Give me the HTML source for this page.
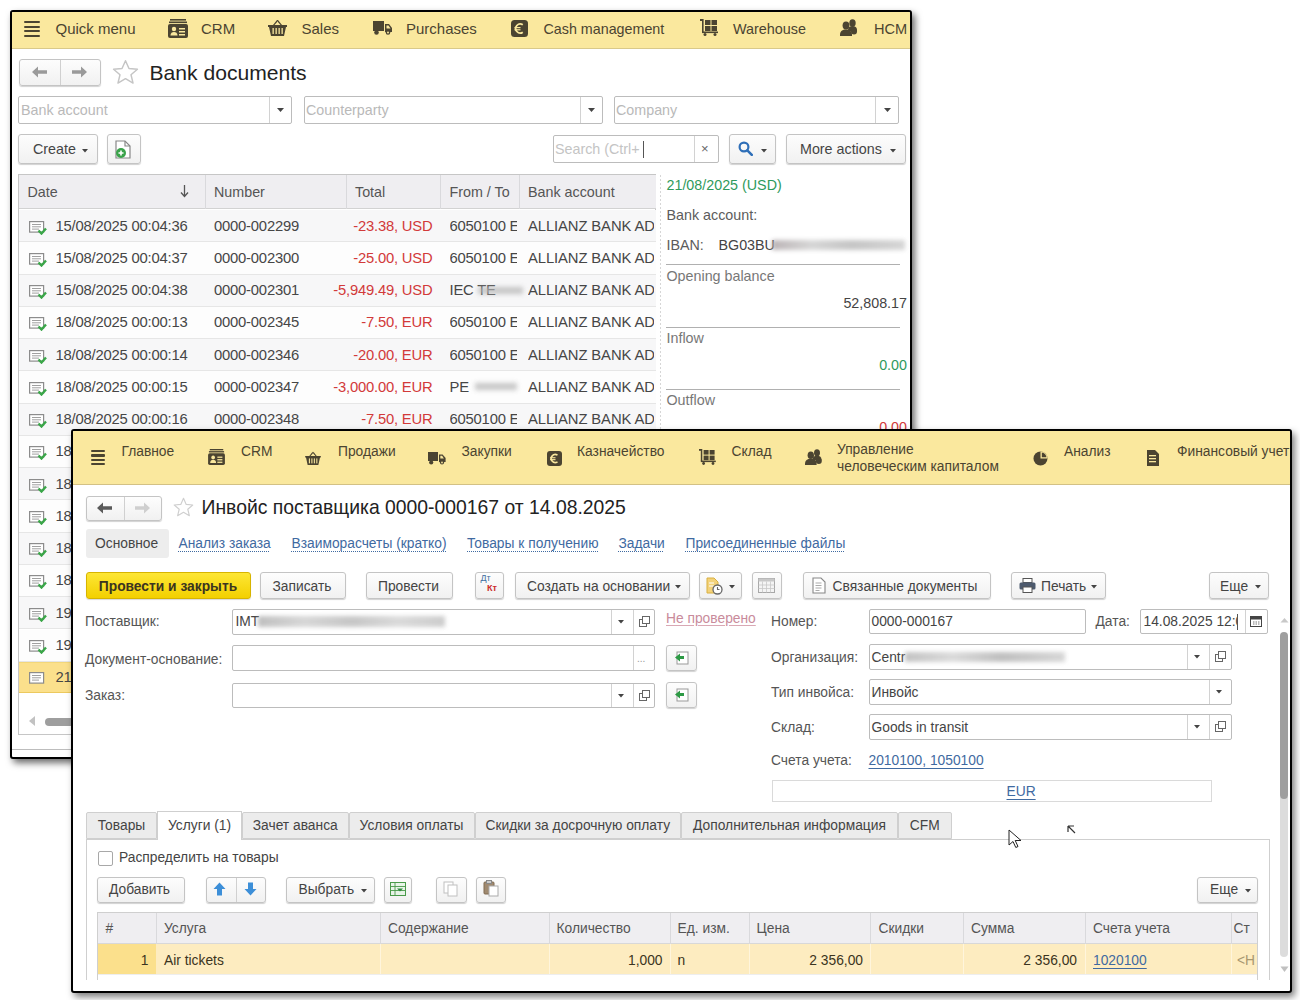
<!DOCTYPE html><html><head><meta charset="utf-8"><style>
*{margin:0;padding:0;box-sizing:border-box}
html,body{width:1300px;height:1000px;overflow:hidden;background:#fff;font-family:"Liberation Sans", sans-serif}
.t{position:absolute;white-space:nowrap;line-height:1;font-family:"Liberation Sans", sans-serif}
.b{position:absolute}
.win{position:absolute;border:2px solid #000;background:#fff;overflow:hidden}
.in{position:absolute;left:0;top:0;width:1300px;height:1000px}
.btn{position:absolute;border:1px solid #c4c4c4;border-radius:3px;background:linear-gradient(#fdfdfd,#f1f1f1);box-shadow:0 1px 1px rgba(0,0,0,.18)}
.fld{position:absolute;border:1px solid #bcbcbc;border-radius:2px;background:#fff}
.vl{position:absolute;width:1px;background:#d6d6d6}
</style></head><body>
<div class="win" style="left:10px;top:10px;width:902px;height:749px;border-radius:3px;box-shadow:3px 4px 7px rgba(0,0,0,.58)">
<div class="in" style="left:-12px;top:-12px">
<div class="b" style="left:0.0px;top:12.0px;width:1300.0px;height:37.0px;background:#fae89e;border-bottom:1px solid #d9c98a"></div>
<div class="b" style="left:24.0px;top:21.0px;width:16.0px;height:2.0px;background:#4b4431;border-radius:1px"></div>
<div class="b" style="left:24.0px;top:25.5px;width:16.0px;height:2.0px;background:#4b4431;border-radius:1px"></div>
<div class="b" style="left:24.0px;top:30.0px;width:16.0px;height:2.0px;background:#4b4431;border-radius:1px"></div>
<div class="b" style="left:24.0px;top:34.5px;width:16.0px;height:2.0px;background:#4b4431;border-radius:1px"></div>
<div class="t" style="left:55.5px;top:21.3px;font-size:15px;color:#4b4431;">Quick menu</div>
<svg class="b" style="left:168px;top:19px" width="20" height="19" viewBox="0 0 20 19"><g fill="#4b4431"><rect x="2" y="0" width="16" height="1.6"/><rect x="1" y="2.5" width="18" height="1.6"/><rect x="0" y="5" width="20" height="14" rx="2"/></g><g fill="#fae89e"><circle cx="6" cy="10" r="2.2"/><path d="M2.5 16.5c0-2.5 1.5-3.6 3.5-3.6s3.5 1.1 3.5 3.6z"/><rect x="11" y="9" width="6" height="1.5"/><rect x="11" y="12" width="6" height="1.5"/><rect x="11" y="15" width="6" height="1.5"/></g></svg>
<div class="t" style="left:201.0px;top:21.3px;font-size:15px;color:#4b4431;">CRM</div>
<svg class="b" style="left:268px;top:19px" width="19" height="17" viewBox="0 0 19 17"><g fill="#4b4431"><path d="M0 6h19v2h-1l-2 9H3L1 8H0z"/><path d="M5 6l4-5 1 1-3.5 4zM14 6l-4-5-1 1 3.5 4z"/></g><g fill="#fae89e"><rect x="4.5" y="9" width="1.3" height="6"/><rect x="7.5" y="9" width="1.3" height="6"/><rect x="10.5" y="9" width="1.3" height="6"/><rect x="13.5" y="9" width="1.3" height="6"/></g></svg>
<div class="t" style="left:301.5px;top:21.3px;font-size:15px;color:#4b4431;">Sales</div>
<svg class="b" style="left:373px;top:20px" width="19" height="15" viewBox="0 0 19 15"><g fill="#4b4431"><rect x="0" y="1" width="11" height="10"/><path d="M12 4h4l3 4v4h-7z"/><circle cx="3.5" cy="12.5" r="2.3"/><circle cx="15" cy="12.5" r="2.3"/></g><g fill="#fae89e"><path d="M13.5 5.5h2l2 3h-4z"/><circle cx="15" cy="12.5" r="1"/></g></svg>
<div class="t" style="left:406.0px;top:21.3px;font-size:15px;color:#4b4431;">Purchases</div>
<svg class="b" style="left:511px;top:20px" width="17" height="17" viewBox="0 0 17 17"><rect x="0" y="0" width="17" height="17" rx="3.5" fill="#4b4431"/><path d="M11.8 4.8A4.5 4.5 0 1 0 11.8 12.2" stroke="#fae89e" stroke-width="1.8" fill="none"/><rect x="3.5" y="7" width="6" height="1.2" fill="#fae89e"/><rect x="3.5" y="9.2" width="6" height="1.2" fill="#fae89e"/></svg>
<div class="t" style="left:543.5px;top:21.9px;font-size:14.3px;color:#4b4431;">Cash management</div>
<svg class="b" style="left:700px;top:19px" width="18" height="17" viewBox="0 0 18 17"><g fill="#4b4431"><rect x="0" y="0" width="3" height="2"/><rect x="2" y="0" width="1.6" height="13"/><rect x="5" y="1" width="5.5" height="5"/><rect x="11.5" y="1" width="5.5" height="5"/><rect x="5" y="7" width="5.5" height="5"/><rect x="11.5" y="7" width="5.5" height="5"/><rect x="2" y="12.5" width="16" height="1.6"/><circle cx="5" cy="15.5" r="1.5"/><circle cx="15" cy="15.5" r="1.5"/></g></svg>
<div class="t" style="left:733.0px;top:21.8px;font-size:14.4px;color:#4b4431;">Warehouse</div>
<svg class="b" style="left:840px;top:19px" width="19" height="17" viewBox="0 0 19 17"><g fill="#4b4431"><ellipse cx="12.5" cy="4" rx="3.2" ry="3.8"/><path d="M8 11c0-3 2-4 4.5-4s4.5 1 4.5 4v1H8z"/><ellipse cx="6" cy="6.5" rx="3.4" ry="4"/><path d="M0 16c0-4 2.5-5.5 6-5.5s6 1.5 6 5.5v1H0z"/><path d="M11 12.5a3 3 0 1 1 6 0 3 3 0 1 1 -6 0z"/></g></svg>
<div class="t" style="left:874.0px;top:21.6px;font-size:14.6px;color:#4b4431;">HCM</div>
<div class="btn" style="left:19px;top:59px;width:82px;height:27px"></div>
<div class="b" style="left:60.0px;top:60.0px;width:1.0px;height:25.0px;background:#d0d0d0"></div>
<svg class="b" style="left:32px;top:66px" width="15" height="12" viewBox="0 0 15 12"><path d="M0 6L6 0.5V4.2H15V7.8H6V11.5z" fill="#9a9a9a"/></svg>
<svg class="b" style="left:72px;top:66px" width="15" height="12" viewBox="0 0 15 12"><path d="M15 6L9 0.5V4.2H0V7.8H9V11.5z" fill="#9a9a9a"/></svg>
<svg class="b" style="left:112px;top:59px" width="27" height="27" viewBox="0 0 24 24"><path d="M12 1.5l3.1 7 7.5.6-5.7 4.9 1.8 7.4L12 17.5l-6.7 3.9 1.8-7.4L1.4 9.1l7.5-.6z" fill="none" stroke="#c5c5c5" stroke-width="1.3" stroke-linejoin="round"/></svg>
<div class="t" style="left:149.5px;top:61.9px;font-size:21.1px;color:#222;">Bank documents</div>
<div class="fld" style="left:18px;top:96px;width:274px;height:28px"></div>
<div class="b" style="left:269.0px;top:97.0px;width:1.0px;height:26.0px;background:#d2d2d2"></div>
<svg class="b" style="left:277px;top:108px" width="7" height="5" viewBox="0 0 7 5"><path d="M0 0H7L3.5 4.0z" fill="#444"/></svg>
<div class="t" style="left:21.0px;top:103.4px;font-size:14.3px;color:#b9b9b9;">Bank account</div>
<div class="fld" style="left:304px;top:96px;width:299px;height:28px"></div>
<div class="b" style="left:580.0px;top:97.0px;width:1.0px;height:26.0px;background:#d2d2d2"></div>
<svg class="b" style="left:588px;top:108px" width="7" height="5" viewBox="0 0 7 5"><path d="M0 0H7L3.5 4.0z" fill="#444"/></svg>
<div class="t" style="left:306.0px;top:103.4px;font-size:14.3px;color:#b9b9b9;">Counterparty</div>
<div class="fld" style="left:614px;top:96px;width:285px;height:28px"></div>
<div class="b" style="left:875.0px;top:97.0px;width:1.0px;height:26.0px;background:#d2d2d2"></div>
<svg class="b" style="left:884px;top:108px" width="7" height="5" viewBox="0 0 7 5"><path d="M0 0H7L3.5 4.0z" fill="#444"/></svg>
<div class="t" style="left:616.0px;top:103.4px;font-size:14.3px;color:#b9b9b9;">Company</div>
<div class="btn" style="left:18px;top:134px;width:80px;height:30px"></div>
<div class="t" style="left:33.0px;top:141.9px;font-size:14.3px;color:#454545;">Create</div>
<svg class="b" style="left:82px;top:149px" width="6" height="4" viewBox="0 0 6 4"><path d="M0 0H6L3.0 3.5z" fill="#444"/></svg>
<div class="btn" style="left:107px;top:134px;width:34px;height:30px"></div>
<svg class="b" style="left:115px;top:140px" width="17" height="19" viewBox="0 0 17 19"><path d="M1 1h9l5 5v12H1z" fill="#fff" stroke="#888" stroke-width="1.2"/><path d="M10 1v5h5" fill="none" stroke="#888" stroke-width="1.2"/><circle cx="6" cy="13" r="5" fill="#3aa34a"/><path d="M3.5 13h5M6 10.5v5" stroke="#fff" stroke-width="1.6"/></svg>
<div class="fld" style="left:553px;top:135px;width:166px;height:28px"></div>
<div class="b" style="left:694.0px;top:136.0px;width:1.0px;height:26.0px;background:#d2d2d2"></div>
<div class="t" style="left:555.0px;top:141.9px;font-size:14.3px;color:#c4c4c4;">Search (Ctrl+</div>
<div class="b" style="left:642.5px;top:141.0px;width:1.0px;height:17.0px;background:#555"></div>
<div class="t" style="left:701.0px;top:142.0px;font-size:13px;color:#666;">×</div>
<div class="btn" style="left:729px;top:134px;width:47px;height:30px"></div>
<svg class="b" style="left:738px;top:141px" width="15" height="15" viewBox="0 0 15 15"><circle cx="6" cy="6" r="4.4" fill="none" stroke="#2f6fb8" stroke-width="2.2"/><path d="M9.3 9.3l4.5 4.5" stroke="#2f6fb8" stroke-width="2.6" stroke-linecap="round"/></svg>
<svg class="b" style="left:761px;top:149px" width="6" height="4" viewBox="0 0 6 4"><path d="M0 0H6L3.0 3.5z" fill="#444"/></svg>
<div class="btn" style="left:786px;top:134px;width:120px;height:30px"></div>
<div class="t" style="left:800.0px;top:141.9px;font-size:14.3px;color:#454545;">More actions</div>
<svg class="b" style="left:890px;top:149px" width="6" height="4" viewBox="0 0 6 4"><path d="M0 0H6L3.0 3.5z" fill="#444"/></svg>
<div class="b" style="left:18.0px;top:174.0px;width:638.0px;height:561.0px;border:1px solid #c6c6c6;background:#fff"></div>
<div class="b" style="left:19.0px;top:175.0px;width:637.0px;height:34.0px;background:#efeef1;border-bottom:1px solid #d2d2d2"></div>
<div class="b" style="left:204.5px;top:175.0px;width:1.0px;height:34.0px;background:#d9d9dc"></div>
<div class="b" style="left:345.5px;top:175.0px;width:1.0px;height:34.0px;background:#d9d9dc"></div>
<div class="b" style="left:440.0px;top:175.0px;width:1.0px;height:34.0px;background:#d9d9dc"></div>
<div class="b" style="left:519.0px;top:175.0px;width:1.0px;height:34.0px;background:#d9d9dc"></div>
<div class="t" style="left:27.5px;top:184.9px;font-size:14.3px;color:#555;">Date</div>
<svg class="b" style="left:180px;top:185px" width="9" height="13" viewBox="0 0 9 13"><path d="M4.5 0v11M1 7.5l3.5 4 3.5-4" fill="none" stroke="#555" stroke-width="1.3"/></svg>
<div class="t" style="left:214.0px;top:184.9px;font-size:14.3px;color:#555;">Number</div>
<div class="t" style="left:355.0px;top:184.9px;font-size:14.3px;color:#555;">Total</div>
<div class="t" style="left:449.5px;top:184.9px;font-size:14.3px;color:#555;width:66px;overflow:hidden">From / To</div>
<div class="t" style="left:528.0px;top:184.9px;font-size:14.3px;color:#555;">Bank account</div>
<div class="b" style="left:19.0px;top:210.0px;width:637.0px;height:32.3px;background:#f7f7f8;border-bottom:1px solid #e6e6e6"></div>
<svg class="b" style="left:29px;top:220.5px" width="18" height="14" viewBox="0 0 18 14"><rect x="0.6" y="0.6" width="14" height="10.5" fill="#fff" stroke="#8c8c8c" stroke-width="1.2"/><path d="M3 3.5h9M3 5.8h9M3 8.1h7" stroke="#a0a0a0" stroke-width="1"/><path d="M9.5 9.5l3 3 4.5-5" fill="none" stroke="#3aa648" stroke-width="2.4"/></svg>
<div class="t" style="left:55.5px;top:218.5px;font-size:14.8px;color:#464646;letter-spacing:-0.2px;">15/08/2025 00:04:36</div>
<div class="t" style="left:214.0px;top:218.5px;font-size:14.8px;color:#464646;letter-spacing:-0.2px;">0000-002299</div>
<div class="t" style="right:867.5px;top:218.5px;font-size:14.8px;color:#d23a3a;letter-spacing:-0.2px;">-23.38, USD</div>
<div class="t" style="left:449.5px;top:218.5px;font-size:14.8px;color:#464646;letter-spacing:-0.2px;width:67px;overflow:hidden">6050100 E</div>
<div class="t" style="left:528.0px;top:218.5px;font-size:14.8px;color:#464646;letter-spacing:-0.1px;width:126px;overflow:hidden">ALLIANZ BANK AD</div>
<div class="b" style="left:19.0px;top:242.3px;width:637.0px;height:32.3px;background:#fdfdfd;border-bottom:1px solid #e6e6e6"></div>
<svg class="b" style="left:29px;top:252.77px" width="18" height="14" viewBox="0 0 18 14"><rect x="0.6" y="0.6" width="14" height="10.5" fill="#fff" stroke="#8c8c8c" stroke-width="1.2"/><path d="M3 3.5h9M3 5.8h9M3 8.1h7" stroke="#a0a0a0" stroke-width="1"/><path d="M9.5 9.5l3 3 4.5-5" fill="none" stroke="#3aa648" stroke-width="2.4"/></svg>
<div class="t" style="left:55.5px;top:250.7px;font-size:14.8px;color:#464646;letter-spacing:-0.2px;">15/08/2025 00:04:37</div>
<div class="t" style="left:214.0px;top:250.7px;font-size:14.8px;color:#464646;letter-spacing:-0.2px;">0000-002300</div>
<div class="t" style="right:867.5px;top:250.7px;font-size:14.8px;color:#d23a3a;letter-spacing:-0.2px;">-25.00, USD</div>
<div class="t" style="left:449.5px;top:250.7px;font-size:14.8px;color:#464646;letter-spacing:-0.2px;width:67px;overflow:hidden">6050100 E</div>
<div class="t" style="left:528.0px;top:250.7px;font-size:14.8px;color:#464646;letter-spacing:-0.1px;width:126px;overflow:hidden">ALLIANZ BANK AD</div>
<div class="b" style="left:19.0px;top:274.5px;width:637.0px;height:32.3px;background:#f7f7f8;border-bottom:1px solid #e6e6e6"></div>
<svg class="b" style="left:29px;top:285.04px" width="18" height="14" viewBox="0 0 18 14"><rect x="0.6" y="0.6" width="14" height="10.5" fill="#fff" stroke="#8c8c8c" stroke-width="1.2"/><path d="M3 3.5h9M3 5.8h9M3 8.1h7" stroke="#a0a0a0" stroke-width="1"/><path d="M9.5 9.5l3 3 4.5-5" fill="none" stroke="#3aa648" stroke-width="2.4"/></svg>
<div class="t" style="left:55.5px;top:283.0px;font-size:14.8px;color:#464646;letter-spacing:-0.2px;">15/08/2025 00:04:38</div>
<div class="t" style="left:214.0px;top:283.0px;font-size:14.8px;color:#464646;letter-spacing:-0.2px;">0000-002301</div>
<div class="t" style="right:867.5px;top:283.0px;font-size:14.8px;color:#d23a3a;letter-spacing:-0.2px;">-5,949.49, USD</div>
<div class="t" style="left:449.5px;top:283.0px;font-size:14.8px;color:#464646;letter-spacing:-0.2px;">IEC TE</div>
<div class="b" style="left:478.0px;top:286.5px;width:45.0px;height:7.0px;background:#b8b8b8;filter:blur(2.5px);opacity:.8"></div>
<div class="t" style="left:528.0px;top:283.0px;font-size:14.8px;color:#464646;letter-spacing:-0.1px;width:126px;overflow:hidden">ALLIANZ BANK AD</div>
<div class="b" style="left:19.0px;top:306.8px;width:637.0px;height:32.3px;background:#fdfdfd;border-bottom:1px solid #e6e6e6"></div>
<svg class="b" style="left:29px;top:317.31px" width="18" height="14" viewBox="0 0 18 14"><rect x="0.6" y="0.6" width="14" height="10.5" fill="#fff" stroke="#8c8c8c" stroke-width="1.2"/><path d="M3 3.5h9M3 5.8h9M3 8.1h7" stroke="#a0a0a0" stroke-width="1"/><path d="M9.5 9.5l3 3 4.5-5" fill="none" stroke="#3aa648" stroke-width="2.4"/></svg>
<div class="t" style="left:55.5px;top:315.3px;font-size:14.8px;color:#464646;letter-spacing:-0.2px;">18/08/2025 00:00:13</div>
<div class="t" style="left:214.0px;top:315.3px;font-size:14.8px;color:#464646;letter-spacing:-0.2px;">0000-002345</div>
<div class="t" style="right:867.5px;top:315.3px;font-size:14.8px;color:#d23a3a;letter-spacing:-0.2px;">-7.50, EUR</div>
<div class="t" style="left:449.5px;top:315.3px;font-size:14.8px;color:#464646;letter-spacing:-0.2px;width:67px;overflow:hidden">6050100 E</div>
<div class="t" style="left:528.0px;top:315.3px;font-size:14.8px;color:#464646;letter-spacing:-0.1px;width:126px;overflow:hidden">ALLIANZ BANK AD</div>
<div class="b" style="left:19.0px;top:339.1px;width:637.0px;height:32.3px;background:#f7f7f8;border-bottom:1px solid #e6e6e6"></div>
<svg class="b" style="left:29px;top:349.58000000000004px" width="18" height="14" viewBox="0 0 18 14"><rect x="0.6" y="0.6" width="14" height="10.5" fill="#fff" stroke="#8c8c8c" stroke-width="1.2"/><path d="M3 3.5h9M3 5.8h9M3 8.1h7" stroke="#a0a0a0" stroke-width="1"/><path d="M9.5 9.5l3 3 4.5-5" fill="none" stroke="#3aa648" stroke-width="2.4"/></svg>
<div class="t" style="left:55.5px;top:347.6px;font-size:14.8px;color:#464646;letter-spacing:-0.2px;">18/08/2025 00:00:14</div>
<div class="t" style="left:214.0px;top:347.6px;font-size:14.8px;color:#464646;letter-spacing:-0.2px;">0000-002346</div>
<div class="t" style="right:867.5px;top:347.6px;font-size:14.8px;color:#d23a3a;letter-spacing:-0.2px;">-20.00, EUR</div>
<div class="t" style="left:449.5px;top:347.6px;font-size:14.8px;color:#464646;letter-spacing:-0.2px;width:67px;overflow:hidden">6050100 E</div>
<div class="t" style="left:528.0px;top:347.6px;font-size:14.8px;color:#464646;letter-spacing:-0.1px;width:126px;overflow:hidden">ALLIANZ BANK AD</div>
<div class="b" style="left:19.0px;top:371.4px;width:637.0px;height:32.3px;background:#fdfdfd;border-bottom:1px solid #e6e6e6"></div>
<svg class="b" style="left:29px;top:381.85px" width="18" height="14" viewBox="0 0 18 14"><rect x="0.6" y="0.6" width="14" height="10.5" fill="#fff" stroke="#8c8c8c" stroke-width="1.2"/><path d="M3 3.5h9M3 5.8h9M3 8.1h7" stroke="#a0a0a0" stroke-width="1"/><path d="M9.5 9.5l3 3 4.5-5" fill="none" stroke="#3aa648" stroke-width="2.4"/></svg>
<div class="t" style="left:55.5px;top:379.8px;font-size:14.8px;color:#464646;letter-spacing:-0.2px;">18/08/2025 00:00:15</div>
<div class="t" style="left:214.0px;top:379.8px;font-size:14.8px;color:#464646;letter-spacing:-0.2px;">0000-002347</div>
<div class="t" style="right:867.5px;top:379.8px;font-size:14.8px;color:#d23a3a;letter-spacing:-0.2px;">-3,000.00, EUR</div>
<div class="t" style="left:449.5px;top:379.8px;font-size:14.8px;color:#464646;letter-spacing:-0.2px;">PE</div>
<div class="b" style="left:475.0px;top:383.4px;width:42.0px;height:7.0px;background:#b8b8b8;filter:blur(2.5px);opacity:.8"></div>
<div class="t" style="left:528.0px;top:379.8px;font-size:14.8px;color:#464646;letter-spacing:-0.1px;width:126px;overflow:hidden">ALLIANZ BANK AD</div>
<div class="b" style="left:19.0px;top:403.6px;width:637.0px;height:32.3px;background:#f7f7f8;border-bottom:1px solid #e6e6e6"></div>
<svg class="b" style="left:29px;top:414.12px" width="18" height="14" viewBox="0 0 18 14"><rect x="0.6" y="0.6" width="14" height="10.5" fill="#fff" stroke="#8c8c8c" stroke-width="1.2"/><path d="M3 3.5h9M3 5.8h9M3 8.1h7" stroke="#a0a0a0" stroke-width="1"/><path d="M9.5 9.5l3 3 4.5-5" fill="none" stroke="#3aa648" stroke-width="2.4"/></svg>
<div class="t" style="left:55.5px;top:412.1px;font-size:14.8px;color:#464646;letter-spacing:-0.2px;">18/08/2025 00:00:16</div>
<div class="t" style="left:214.0px;top:412.1px;font-size:14.8px;color:#464646;letter-spacing:-0.2px;">0000-002348</div>
<div class="t" style="right:867.5px;top:412.1px;font-size:14.8px;color:#d23a3a;letter-spacing:-0.2px;">-7.50, EUR</div>
<div class="t" style="left:449.5px;top:412.1px;font-size:14.8px;color:#464646;letter-spacing:-0.2px;width:67px;overflow:hidden">6050100 E</div>
<div class="t" style="left:528.0px;top:412.1px;font-size:14.8px;color:#464646;letter-spacing:-0.1px;width:126px;overflow:hidden">ALLIANZ BANK AD</div>
<div class="b" style="left:19.0px;top:435.9px;width:637.0px;height:32.3px;background:#fdfdfd;border-bottom:1px solid #e6e6e6"></div>
<svg class="b" style="left:29px;top:446.39px" width="18" height="14" viewBox="0 0 18 14"><rect x="0.6" y="0.6" width="14" height="10.5" fill="#fff" stroke="#8c8c8c" stroke-width="1.2"/><path d="M3 3.5h9M3 5.8h9M3 8.1h7" stroke="#a0a0a0" stroke-width="1"/><path d="M9.5 9.5l3 3 4.5-5" fill="none" stroke="#3aa648" stroke-width="2.4"/></svg>
<div class="t" style="left:55.5px;top:444.4px;font-size:14.8px;color:#464646;letter-spacing:-0.2px;">18/08/2025 00:00:17</div>
<div class="t" style="left:214.0px;top:444.4px;font-size:14.8px;color:#464646;letter-spacing:-0.2px;">0000-002349</div>
<div class="t" style="right:867.5px;top:444.4px;font-size:14.8px;color:#d23a3a;letter-spacing:-0.2px;">-7.50, EUR</div>
<div class="t" style="left:449.5px;top:444.4px;font-size:14.8px;color:#464646;letter-spacing:-0.2px;width:67px;overflow:hidden">6050100 E</div>
<div class="t" style="left:528.0px;top:444.4px;font-size:14.8px;color:#464646;letter-spacing:-0.1px;width:126px;overflow:hidden">ALLIANZ BANK AD</div>
<div class="b" style="left:19.0px;top:468.2px;width:637.0px;height:32.3px;background:#f7f7f8;border-bottom:1px solid #e6e6e6"></div>
<svg class="b" style="left:29px;top:478.66px" width="18" height="14" viewBox="0 0 18 14"><rect x="0.6" y="0.6" width="14" height="10.5" fill="#fff" stroke="#8c8c8c" stroke-width="1.2"/><path d="M3 3.5h9M3 5.8h9M3 8.1h7" stroke="#a0a0a0" stroke-width="1"/><path d="M9.5 9.5l3 3 4.5-5" fill="none" stroke="#3aa648" stroke-width="2.4"/></svg>
<div class="t" style="left:55.5px;top:476.6px;font-size:14.8px;color:#464646;letter-spacing:-0.2px;">18/08/2025 00:00:18</div>
<div class="t" style="left:214.0px;top:476.6px;font-size:14.8px;color:#464646;letter-spacing:-0.2px;">0000-002350</div>
<div class="t" style="right:867.5px;top:476.6px;font-size:14.8px;color:#d23a3a;letter-spacing:-0.2px;">-7.50, EUR</div>
<div class="t" style="left:449.5px;top:476.6px;font-size:14.8px;color:#464646;letter-spacing:-0.2px;width:67px;overflow:hidden">6050100 E</div>
<div class="t" style="left:528.0px;top:476.6px;font-size:14.8px;color:#464646;letter-spacing:-0.1px;width:126px;overflow:hidden">ALLIANZ BANK AD</div>
<div class="b" style="left:19.0px;top:500.4px;width:637.0px;height:32.3px;background:#fdfdfd;border-bottom:1px solid #e6e6e6"></div>
<svg class="b" style="left:29px;top:510.93px" width="18" height="14" viewBox="0 0 18 14"><rect x="0.6" y="0.6" width="14" height="10.5" fill="#fff" stroke="#8c8c8c" stroke-width="1.2"/><path d="M3 3.5h9M3 5.8h9M3 8.1h7" stroke="#a0a0a0" stroke-width="1"/><path d="M9.5 9.5l3 3 4.5-5" fill="none" stroke="#3aa648" stroke-width="2.4"/></svg>
<div class="t" style="left:55.5px;top:508.9px;font-size:14.8px;color:#464646;letter-spacing:-0.2px;">18/08/2025 00:00:19</div>
<div class="t" style="left:214.0px;top:508.9px;font-size:14.8px;color:#464646;letter-spacing:-0.2px;">0000-002351</div>
<div class="t" style="right:867.5px;top:508.9px;font-size:14.8px;color:#d23a3a;letter-spacing:-0.2px;">-7.50, EUR</div>
<div class="t" style="left:449.5px;top:508.9px;font-size:14.8px;color:#464646;letter-spacing:-0.2px;width:67px;overflow:hidden">6050100 E</div>
<div class="t" style="left:528.0px;top:508.9px;font-size:14.8px;color:#464646;letter-spacing:-0.1px;width:126px;overflow:hidden">ALLIANZ BANK AD</div>
<div class="b" style="left:19.0px;top:532.7px;width:637.0px;height:32.3px;background:#f7f7f8;border-bottom:1px solid #e6e6e6"></div>
<svg class="b" style="left:29px;top:543.2px" width="18" height="14" viewBox="0 0 18 14"><rect x="0.6" y="0.6" width="14" height="10.5" fill="#fff" stroke="#8c8c8c" stroke-width="1.2"/><path d="M3 3.5h9M3 5.8h9M3 8.1h7" stroke="#a0a0a0" stroke-width="1"/><path d="M9.5 9.5l3 3 4.5-5" fill="none" stroke="#3aa648" stroke-width="2.4"/></svg>
<div class="t" style="left:55.5px;top:541.2px;font-size:14.8px;color:#464646;letter-spacing:-0.2px;">18/08/2025 00:00:20</div>
<div class="t" style="left:214.0px;top:541.2px;font-size:14.8px;color:#464646;letter-spacing:-0.2px;">0000-002352</div>
<div class="t" style="right:867.5px;top:541.2px;font-size:14.8px;color:#d23a3a;letter-spacing:-0.2px;">-7.50, EUR</div>
<div class="t" style="left:449.5px;top:541.2px;font-size:14.8px;color:#464646;letter-spacing:-0.2px;width:67px;overflow:hidden">6050100 E</div>
<div class="t" style="left:528.0px;top:541.2px;font-size:14.8px;color:#464646;letter-spacing:-0.1px;width:126px;overflow:hidden">ALLIANZ BANK AD</div>
<div class="b" style="left:19.0px;top:565.0px;width:637.0px;height:32.3px;background:#fdfdfd;border-bottom:1px solid #e6e6e6"></div>
<svg class="b" style="left:29px;top:575.47px" width="18" height="14" viewBox="0 0 18 14"><rect x="0.6" y="0.6" width="14" height="10.5" fill="#fff" stroke="#8c8c8c" stroke-width="1.2"/><path d="M3 3.5h9M3 5.8h9M3 8.1h7" stroke="#a0a0a0" stroke-width="1"/><path d="M9.5 9.5l3 3 4.5-5" fill="none" stroke="#3aa648" stroke-width="2.4"/></svg>
<div class="t" style="left:55.5px;top:573.4px;font-size:14.8px;color:#464646;letter-spacing:-0.2px;">18/08/2025 00:00:21</div>
<div class="t" style="left:214.0px;top:573.4px;font-size:14.8px;color:#464646;letter-spacing:-0.2px;">0000-002353</div>
<div class="t" style="right:867.5px;top:573.4px;font-size:14.8px;color:#d23a3a;letter-spacing:-0.2px;">-7.50, EUR</div>
<div class="t" style="left:449.5px;top:573.4px;font-size:14.8px;color:#464646;letter-spacing:-0.2px;width:67px;overflow:hidden">6050100 E</div>
<div class="t" style="left:528.0px;top:573.4px;font-size:14.8px;color:#464646;letter-spacing:-0.1px;width:126px;overflow:hidden">ALLIANZ BANK AD</div>
<div class="b" style="left:19.0px;top:597.2px;width:637.0px;height:32.3px;background:#f7f7f8;border-bottom:1px solid #e6e6e6"></div>
<svg class="b" style="left:29px;top:607.74px" width="18" height="14" viewBox="0 0 18 14"><rect x="0.6" y="0.6" width="14" height="10.5" fill="#fff" stroke="#8c8c8c" stroke-width="1.2"/><path d="M3 3.5h9M3 5.8h9M3 8.1h7" stroke="#a0a0a0" stroke-width="1"/><path d="M9.5 9.5l3 3 4.5-5" fill="none" stroke="#3aa648" stroke-width="2.4"/></svg>
<div class="t" style="left:55.5px;top:605.7px;font-size:14.8px;color:#464646;letter-spacing:-0.2px;">19/08/2025 00:00:01</div>
<div class="t" style="left:214.0px;top:605.7px;font-size:14.8px;color:#464646;letter-spacing:-0.2px;">0000-002360</div>
<div class="t" style="right:867.5px;top:605.7px;font-size:14.8px;color:#d23a3a;letter-spacing:-0.2px;">-7.50, EUR</div>
<div class="t" style="left:449.5px;top:605.7px;font-size:14.8px;color:#464646;letter-spacing:-0.2px;width:67px;overflow:hidden">6050100 E</div>
<div class="t" style="left:528.0px;top:605.7px;font-size:14.8px;color:#464646;letter-spacing:-0.1px;width:126px;overflow:hidden">ALLIANZ BANK AD</div>
<div class="b" style="left:19.0px;top:629.5px;width:637.0px;height:32.3px;background:#fdfdfd;border-bottom:1px solid #e6e6e6"></div>
<svg class="b" style="left:29px;top:640.01px" width="18" height="14" viewBox="0 0 18 14"><rect x="0.6" y="0.6" width="14" height="10.5" fill="#fff" stroke="#8c8c8c" stroke-width="1.2"/><path d="M3 3.5h9M3 5.8h9M3 8.1h7" stroke="#a0a0a0" stroke-width="1"/><path d="M9.5 9.5l3 3 4.5-5" fill="none" stroke="#3aa648" stroke-width="2.4"/></svg>
<div class="t" style="left:55.5px;top:638.0px;font-size:14.8px;color:#464646;letter-spacing:-0.2px;">19/08/2025 00:00:02</div>
<div class="t" style="left:214.0px;top:638.0px;font-size:14.8px;color:#464646;letter-spacing:-0.2px;">0000-002361</div>
<div class="t" style="right:867.5px;top:638.0px;font-size:14.8px;color:#d23a3a;letter-spacing:-0.2px;">-7.50, EUR</div>
<div class="t" style="left:449.5px;top:638.0px;font-size:14.8px;color:#464646;letter-spacing:-0.2px;width:67px;overflow:hidden">6050100 E</div>
<div class="t" style="left:528.0px;top:638.0px;font-size:14.8px;color:#464646;letter-spacing:-0.1px;width:126px;overflow:hidden">ALLIANZ BANK AD</div>
<div class="b" style="left:19.0px;top:661.8px;width:637.0px;height:30.8px;background:#fbe08c;border-top:1px solid #f3d77a;border-bottom:1px solid #ecc95e"></div>
<svg class="b" style="left:29px;top:672.28px" width="18" height="14" viewBox="0 0 18 14"><rect x="0.6" y="0.6" width="14" height="10.5" fill="#fff" stroke="#8c8c8c" stroke-width="1.2"/><path d="M3 3.5h9M3 5.8h9M3 8.1h7" stroke="#a0a0a0" stroke-width="1"/></svg>
<div class="t" style="left:55.5px;top:670.3px;font-size:14.8px;color:#464646;letter-spacing:-0.2px;">21/08/2025 00:00:01</div>
<div class="t" style="left:214.0px;top:670.3px;font-size:14.8px;color:#464646;letter-spacing:-0.2px;">0000-002370</div>
<div class="t" style="right:867.5px;top:670.3px;font-size:14.8px;color:#d23a3a;letter-spacing:-0.2px;">-7.50, EUR</div>
<div class="t" style="left:449.5px;top:670.3px;font-size:14.8px;color:#464646;letter-spacing:-0.2px;width:67px;overflow:hidden">6050100 E</div>
<div class="t" style="left:528.0px;top:670.3px;font-size:14.8px;color:#464646;letter-spacing:-0.1px;width:126px;overflow:hidden">ALLIANZ BANK AD</div>
<svg class="b" style="left:28px;top:716px" width="8" height="10" viewBox="0 0 8 10"><path d="M7 0v10L1 5z" fill="#c2c2c2"/></svg>
<div class="b" style="left:45.0px;top:718.0px;width:75.0px;height:8.0px;background:#9e9e9e;border-radius:4px"></div>
<div class="b" style="left:12.0px;top:749.0px;width:900.0px;height:1.0px;background:#bdbdbd"></div>
<div class="b" style="left:660.0px;top:175.0px;width:1.0px;height:2.0px;background:#d6d6d6"></div>
<div class="b" style="left:660.0px;top:179.0px;width:1.0px;height:2.0px;background:#d6d6d6"></div>
<div class="b" style="left:660.0px;top:183.0px;width:1.0px;height:2.0px;background:#d6d6d6"></div>
<div class="b" style="left:660.0px;top:187.0px;width:1.0px;height:2.0px;background:#d6d6d6"></div>
<div class="b" style="left:660.0px;top:191.0px;width:1.0px;height:2.0px;background:#d6d6d6"></div>
<div class="b" style="left:660.0px;top:195.0px;width:1.0px;height:2.0px;background:#d6d6d6"></div>
<div class="b" style="left:660.0px;top:199.0px;width:1.0px;height:2.0px;background:#d6d6d6"></div>
<div class="b" style="left:660.0px;top:203.0px;width:1.0px;height:2.0px;background:#d6d6d6"></div>
<div class="b" style="left:660.0px;top:207.0px;width:1.0px;height:2.0px;background:#d6d6d6"></div>
<div class="b" style="left:660.0px;top:211.0px;width:1.0px;height:2.0px;background:#d6d6d6"></div>
<div class="b" style="left:660.0px;top:215.0px;width:1.0px;height:2.0px;background:#d6d6d6"></div>
<div class="b" style="left:660.0px;top:219.0px;width:1.0px;height:2.0px;background:#d6d6d6"></div>
<div class="b" style="left:660.0px;top:223.0px;width:1.0px;height:2.0px;background:#d6d6d6"></div>
<div class="b" style="left:660.0px;top:227.0px;width:1.0px;height:2.0px;background:#d6d6d6"></div>
<div class="b" style="left:660.0px;top:231.0px;width:1.0px;height:2.0px;background:#d6d6d6"></div>
<div class="b" style="left:660.0px;top:235.0px;width:1.0px;height:2.0px;background:#d6d6d6"></div>
<div class="b" style="left:660.0px;top:239.0px;width:1.0px;height:2.0px;background:#d6d6d6"></div>
<div class="b" style="left:660.0px;top:243.0px;width:1.0px;height:2.0px;background:#d6d6d6"></div>
<div class="b" style="left:660.0px;top:247.0px;width:1.0px;height:2.0px;background:#d6d6d6"></div>
<div class="b" style="left:660.0px;top:251.0px;width:1.0px;height:2.0px;background:#d6d6d6"></div>
<div class="b" style="left:660.0px;top:255.0px;width:1.0px;height:2.0px;background:#d6d6d6"></div>
<div class="b" style="left:660.0px;top:259.0px;width:1.0px;height:2.0px;background:#d6d6d6"></div>
<div class="b" style="left:660.0px;top:263.0px;width:1.0px;height:2.0px;background:#d6d6d6"></div>
<div class="b" style="left:660.0px;top:267.0px;width:1.0px;height:2.0px;background:#d6d6d6"></div>
<div class="b" style="left:660.0px;top:271.0px;width:1.0px;height:2.0px;background:#d6d6d6"></div>
<div class="b" style="left:660.0px;top:275.0px;width:1.0px;height:2.0px;background:#d6d6d6"></div>
<div class="b" style="left:660.0px;top:279.0px;width:1.0px;height:2.0px;background:#d6d6d6"></div>
<div class="b" style="left:660.0px;top:283.0px;width:1.0px;height:2.0px;background:#d6d6d6"></div>
<div class="b" style="left:660.0px;top:287.0px;width:1.0px;height:2.0px;background:#d6d6d6"></div>
<div class="b" style="left:660.0px;top:291.0px;width:1.0px;height:2.0px;background:#d6d6d6"></div>
<div class="b" style="left:660.0px;top:295.0px;width:1.0px;height:2.0px;background:#d6d6d6"></div>
<div class="b" style="left:660.0px;top:299.0px;width:1.0px;height:2.0px;background:#d6d6d6"></div>
<div class="b" style="left:660.0px;top:303.0px;width:1.0px;height:2.0px;background:#d6d6d6"></div>
<div class="b" style="left:660.0px;top:307.0px;width:1.0px;height:2.0px;background:#d6d6d6"></div>
<div class="b" style="left:660.0px;top:311.0px;width:1.0px;height:2.0px;background:#d6d6d6"></div>
<div class="b" style="left:660.0px;top:315.0px;width:1.0px;height:2.0px;background:#d6d6d6"></div>
<div class="b" style="left:660.0px;top:319.0px;width:1.0px;height:2.0px;background:#d6d6d6"></div>
<div class="b" style="left:660.0px;top:323.0px;width:1.0px;height:2.0px;background:#d6d6d6"></div>
<div class="b" style="left:660.0px;top:327.0px;width:1.0px;height:2.0px;background:#d6d6d6"></div>
<div class="b" style="left:660.0px;top:331.0px;width:1.0px;height:2.0px;background:#d6d6d6"></div>
<div class="b" style="left:660.0px;top:335.0px;width:1.0px;height:2.0px;background:#d6d6d6"></div>
<div class="b" style="left:660.0px;top:339.0px;width:1.0px;height:2.0px;background:#d6d6d6"></div>
<div class="b" style="left:660.0px;top:343.0px;width:1.0px;height:2.0px;background:#d6d6d6"></div>
<div class="b" style="left:660.0px;top:347.0px;width:1.0px;height:2.0px;background:#d6d6d6"></div>
<div class="b" style="left:660.0px;top:351.0px;width:1.0px;height:2.0px;background:#d6d6d6"></div>
<div class="b" style="left:660.0px;top:355.0px;width:1.0px;height:2.0px;background:#d6d6d6"></div>
<div class="b" style="left:660.0px;top:359.0px;width:1.0px;height:2.0px;background:#d6d6d6"></div>
<div class="b" style="left:660.0px;top:363.0px;width:1.0px;height:2.0px;background:#d6d6d6"></div>
<div class="b" style="left:660.0px;top:367.0px;width:1.0px;height:2.0px;background:#d6d6d6"></div>
<div class="b" style="left:660.0px;top:371.0px;width:1.0px;height:2.0px;background:#d6d6d6"></div>
<div class="b" style="left:660.0px;top:375.0px;width:1.0px;height:2.0px;background:#d6d6d6"></div>
<div class="b" style="left:660.0px;top:379.0px;width:1.0px;height:2.0px;background:#d6d6d6"></div>
<div class="b" style="left:660.0px;top:383.0px;width:1.0px;height:2.0px;background:#d6d6d6"></div>
<div class="b" style="left:660.0px;top:387.0px;width:1.0px;height:2.0px;background:#d6d6d6"></div>
<div class="b" style="left:660.0px;top:391.0px;width:1.0px;height:2.0px;background:#d6d6d6"></div>
<div class="b" style="left:660.0px;top:395.0px;width:1.0px;height:2.0px;background:#d6d6d6"></div>
<div class="b" style="left:660.0px;top:399.0px;width:1.0px;height:2.0px;background:#d6d6d6"></div>
<div class="b" style="left:660.0px;top:403.0px;width:1.0px;height:2.0px;background:#d6d6d6"></div>
<div class="b" style="left:660.0px;top:407.0px;width:1.0px;height:2.0px;background:#d6d6d6"></div>
<div class="b" style="left:660.0px;top:411.0px;width:1.0px;height:2.0px;background:#d6d6d6"></div>
<div class="b" style="left:660.0px;top:415.0px;width:1.0px;height:2.0px;background:#d6d6d6"></div>
<div class="b" style="left:660.0px;top:419.0px;width:1.0px;height:2.0px;background:#d6d6d6"></div>
<div class="b" style="left:660.0px;top:423.0px;width:1.0px;height:2.0px;background:#d6d6d6"></div>
<div class="b" style="left:660.0px;top:427.0px;width:1.0px;height:2.0px;background:#d6d6d6"></div>
<div class="b" style="left:660.0px;top:431.0px;width:1.0px;height:2.0px;background:#d6d6d6"></div>
<div class="b" style="left:660.0px;top:435.0px;width:1.0px;height:2.0px;background:#d6d6d6"></div>
<div class="b" style="left:660.0px;top:439.0px;width:1.0px;height:2.0px;background:#d6d6d6"></div>
<div class="b" style="left:660.0px;top:443.0px;width:1.0px;height:2.0px;background:#d6d6d6"></div>
<div class="b" style="left:660.0px;top:447.0px;width:1.0px;height:2.0px;background:#d6d6d6"></div>
<div class="b" style="left:660.0px;top:451.0px;width:1.0px;height:2.0px;background:#d6d6d6"></div>
<div class="b" style="left:660.0px;top:455.0px;width:1.0px;height:2.0px;background:#d6d6d6"></div>
<div class="b" style="left:660.0px;top:459.0px;width:1.0px;height:2.0px;background:#d6d6d6"></div>
<div class="b" style="left:660.0px;top:463.0px;width:1.0px;height:2.0px;background:#d6d6d6"></div>
<div class="b" style="left:660.0px;top:467.0px;width:1.0px;height:2.0px;background:#d6d6d6"></div>
<div class="b" style="left:660.0px;top:471.0px;width:1.0px;height:2.0px;background:#d6d6d6"></div>
<div class="b" style="left:660.0px;top:475.0px;width:1.0px;height:2.0px;background:#d6d6d6"></div>
<div class="b" style="left:660.0px;top:479.0px;width:1.0px;height:2.0px;background:#d6d6d6"></div>
<div class="b" style="left:660.0px;top:483.0px;width:1.0px;height:2.0px;background:#d6d6d6"></div>
<div class="b" style="left:660.0px;top:487.0px;width:1.0px;height:2.0px;background:#d6d6d6"></div>
<div class="b" style="left:660.0px;top:491.0px;width:1.0px;height:2.0px;background:#d6d6d6"></div>
<div class="b" style="left:660.0px;top:495.0px;width:1.0px;height:2.0px;background:#d6d6d6"></div>
<div class="b" style="left:660.0px;top:499.0px;width:1.0px;height:2.0px;background:#d6d6d6"></div>
<div class="b" style="left:660.0px;top:503.0px;width:1.0px;height:2.0px;background:#d6d6d6"></div>
<div class="b" style="left:660.0px;top:507.0px;width:1.0px;height:2.0px;background:#d6d6d6"></div>
<div class="b" style="left:660.0px;top:511.0px;width:1.0px;height:2.0px;background:#d6d6d6"></div>
<div class="b" style="left:660.0px;top:515.0px;width:1.0px;height:2.0px;background:#d6d6d6"></div>
<div class="b" style="left:660.0px;top:519.0px;width:1.0px;height:2.0px;background:#d6d6d6"></div>
<div class="b" style="left:660.0px;top:523.0px;width:1.0px;height:2.0px;background:#d6d6d6"></div>
<div class="b" style="left:660.0px;top:527.0px;width:1.0px;height:2.0px;background:#d6d6d6"></div>
<div class="b" style="left:660.0px;top:531.0px;width:1.0px;height:2.0px;background:#d6d6d6"></div>
<div class="b" style="left:660.0px;top:535.0px;width:1.0px;height:2.0px;background:#d6d6d6"></div>
<div class="b" style="left:660.0px;top:539.0px;width:1.0px;height:2.0px;background:#d6d6d6"></div>
<div class="b" style="left:660.0px;top:543.0px;width:1.0px;height:2.0px;background:#d6d6d6"></div>
<div class="b" style="left:660.0px;top:547.0px;width:1.0px;height:2.0px;background:#d6d6d6"></div>
<div class="b" style="left:660.0px;top:551.0px;width:1.0px;height:2.0px;background:#d6d6d6"></div>
<div class="b" style="left:660.0px;top:555.0px;width:1.0px;height:2.0px;background:#d6d6d6"></div>
<div class="b" style="left:660.0px;top:559.0px;width:1.0px;height:2.0px;background:#d6d6d6"></div>
<div class="b" style="left:660.0px;top:563.0px;width:1.0px;height:2.0px;background:#d6d6d6"></div>
<div class="b" style="left:660.0px;top:567.0px;width:1.0px;height:2.0px;background:#d6d6d6"></div>
<div class="b" style="left:660.0px;top:571.0px;width:1.0px;height:2.0px;background:#d6d6d6"></div>
<div class="b" style="left:660.0px;top:575.0px;width:1.0px;height:2.0px;background:#d6d6d6"></div>
<div class="b" style="left:660.0px;top:579.0px;width:1.0px;height:2.0px;background:#d6d6d6"></div>
<div class="b" style="left:660.0px;top:583.0px;width:1.0px;height:2.0px;background:#d6d6d6"></div>
<div class="b" style="left:660.0px;top:587.0px;width:1.0px;height:2.0px;background:#d6d6d6"></div>
<div class="b" style="left:660.0px;top:591.0px;width:1.0px;height:2.0px;background:#d6d6d6"></div>
<div class="b" style="left:660.0px;top:595.0px;width:1.0px;height:2.0px;background:#d6d6d6"></div>
<div class="b" style="left:660.0px;top:599.0px;width:1.0px;height:2.0px;background:#d6d6d6"></div>
<div class="b" style="left:660.0px;top:603.0px;width:1.0px;height:2.0px;background:#d6d6d6"></div>
<div class="b" style="left:660.0px;top:607.0px;width:1.0px;height:2.0px;background:#d6d6d6"></div>
<div class="b" style="left:660.0px;top:611.0px;width:1.0px;height:2.0px;background:#d6d6d6"></div>
<div class="b" style="left:660.0px;top:615.0px;width:1.0px;height:2.0px;background:#d6d6d6"></div>
<div class="b" style="left:660.0px;top:619.0px;width:1.0px;height:2.0px;background:#d6d6d6"></div>
<div class="b" style="left:660.0px;top:623.0px;width:1.0px;height:2.0px;background:#d6d6d6"></div>
<div class="b" style="left:660.0px;top:627.0px;width:1.0px;height:2.0px;background:#d6d6d6"></div>
<div class="b" style="left:660.0px;top:631.0px;width:1.0px;height:2.0px;background:#d6d6d6"></div>
<div class="b" style="left:660.0px;top:635.0px;width:1.0px;height:2.0px;background:#d6d6d6"></div>
<div class="b" style="left:660.0px;top:639.0px;width:1.0px;height:2.0px;background:#d6d6d6"></div>
<div class="b" style="left:660.0px;top:643.0px;width:1.0px;height:2.0px;background:#d6d6d6"></div>
<div class="b" style="left:660.0px;top:647.0px;width:1.0px;height:2.0px;background:#d6d6d6"></div>
<div class="b" style="left:660.0px;top:651.0px;width:1.0px;height:2.0px;background:#d6d6d6"></div>
<div class="b" style="left:660.0px;top:655.0px;width:1.0px;height:2.0px;background:#d6d6d6"></div>
<div class="b" style="left:660.0px;top:659.0px;width:1.0px;height:2.0px;background:#d6d6d6"></div>
<div class="b" style="left:660.0px;top:663.0px;width:1.0px;height:2.0px;background:#d6d6d6"></div>
<div class="b" style="left:660.0px;top:667.0px;width:1.0px;height:2.0px;background:#d6d6d6"></div>
<div class="b" style="left:660.0px;top:671.0px;width:1.0px;height:2.0px;background:#d6d6d6"></div>
<div class="b" style="left:660.0px;top:675.0px;width:1.0px;height:2.0px;background:#d6d6d6"></div>
<div class="b" style="left:660.0px;top:679.0px;width:1.0px;height:2.0px;background:#d6d6d6"></div>
<div class="b" style="left:660.0px;top:683.0px;width:1.0px;height:2.0px;background:#d6d6d6"></div>
<div class="b" style="left:660.0px;top:687.0px;width:1.0px;height:2.0px;background:#d6d6d6"></div>
<div class="b" style="left:660.0px;top:691.0px;width:1.0px;height:2.0px;background:#d6d6d6"></div>
<div class="b" style="left:660.0px;top:695.0px;width:1.0px;height:2.0px;background:#d6d6d6"></div>
<div class="b" style="left:660.0px;top:699.0px;width:1.0px;height:2.0px;background:#d6d6d6"></div>
<div class="b" style="left:660.0px;top:703.0px;width:1.0px;height:2.0px;background:#d6d6d6"></div>
<div class="b" style="left:660.0px;top:707.0px;width:1.0px;height:2.0px;background:#d6d6d6"></div>
<div class="b" style="left:660.0px;top:711.0px;width:1.0px;height:2.0px;background:#d6d6d6"></div>
<div class="b" style="left:660.0px;top:715.0px;width:1.0px;height:2.0px;background:#d6d6d6"></div>
<div class="b" style="left:660.0px;top:719.0px;width:1.0px;height:2.0px;background:#d6d6d6"></div>
<div class="b" style="left:660.0px;top:723.0px;width:1.0px;height:2.0px;background:#d6d6d6"></div>
<div class="b" style="left:660.0px;top:727.0px;width:1.0px;height:2.0px;background:#d6d6d6"></div>
<div class="b" style="left:660.0px;top:731.0px;width:1.0px;height:2.0px;background:#d6d6d6"></div>
<div class="b" style="left:660.0px;top:735.0px;width:1.0px;height:2.0px;background:#d6d6d6"></div>
<div class="b" style="left:660.0px;top:739.0px;width:1.0px;height:2.0px;background:#d6d6d6"></div>
<div class="b" style="left:660.0px;top:743.0px;width:1.0px;height:2.0px;background:#d6d6d6"></div>
<div class="b" style="left:660.0px;top:747.0px;width:1.0px;height:2.0px;background:#d6d6d6"></div>
<div class="b" style="left:660.0px;top:751.0px;width:1.0px;height:2.0px;background:#d6d6d6"></div>
<div class="b" style="left:660.0px;top:755.0px;width:1.0px;height:2.0px;background:#d6d6d6"></div>
<div class="b" style="left:660.0px;top:759.0px;width:1.0px;height:2.0px;background:#d6d6d6"></div>
<div class="t" style="left:666.5px;top:178.4px;font-size:14.3px;color:#2f9a5c;">21/08/2025 (USD)</div>
<div class="t" style="left:666.5px;top:208.4px;font-size:14.3px;color:#5c5c5c;">Bank account:</div>
<div class="t" style="left:666.5px;top:237.9px;font-size:14.3px;color:#5c5c5c;">IBAN:</div>
<div class="t" style="left:718.5px;top:237.9px;font-size:14.3px;color:#444;">BG03BU</div>
<div class="b" style="left:772.0px;top:240.0px;width:133.0px;height:10.0px;background:linear-gradient(90deg,#b0a8aa,#cfcfcf 30%,#bbb 60%,#cfcfcf);filter:blur(2.2px);opacity:.85"></div>
<div class="b" style="left:666.0px;top:264.0px;width:234.0px;height:1.0px;background:#b0b0b0"></div>
<div class="t" style="left:666.5px;top:268.9px;font-size:14.3px;color:#777;">Opening balance</div>
<div class="t" style="right:393.0px;top:296.4px;font-size:14.3px;color:#444;">52,808.17</div>
<div class="b" style="left:666.0px;top:327.0px;width:234.0px;height:1.0px;background:#b0b0b0"></div>
<div class="t" style="left:666.5px;top:330.9px;font-size:14.3px;color:#777;">Inflow</div>
<div class="t" style="right:393.0px;top:358.4px;font-size:14.3px;color:#2f9a5c;">0.00</div>
<div class="b" style="left:666.0px;top:389.0px;width:234.0px;height:1.0px;background:#b0b0b0"></div>
<div class="t" style="left:666.5px;top:392.9px;font-size:14.3px;color:#777;">Outflow</div>
<div class="t" style="right:393.0px;top:420.4px;font-size:14.3px;color:#d23a3a;">0.00</div>
</div></div>
<div class="win" style="left:71px;top:429px;width:1221px;height:564px;border-radius:3px;box-shadow:3px 4px 7px rgba(0,0,0,.5)">
<div class="in" style="left:-73px;top:-431px">
<div class="b" style="left:0.0px;top:431.0px;width:1300.0px;height:54.0px;background:#fae89e;border-bottom:1px solid #d3c185"></div>
<div class="b" style="left:90.5px;top:450.0px;width:14.5px;height:2.3px;background:#4b4431;border-radius:1px"></div>
<div class="b" style="left:90.5px;top:454.4px;width:14.5px;height:2.3px;background:#4b4431;border-radius:1px"></div>
<div class="b" style="left:90.5px;top:458.8px;width:14.5px;height:2.3px;background:#4b4431;border-radius:1px"></div>
<div class="b" style="left:90.5px;top:463.2px;width:14.5px;height:2.3px;background:#4b4431;border-radius:1px"></div>
<div class="t" style="left:121.5px;top:444.9px;font-size:13.8px;color:#4b4431;">Главное</div>
<svg class="b" style="left:208px;top:449px" width="17" height="16" viewBox="0 0 20 19"><g fill="#4b4431"><rect x="2" y="0" width="16" height="1.6"/><rect x="1" y="2.5" width="18" height="1.6"/><rect x="0" y="5" width="20" height="14" rx="2"/></g><g fill="#fae89e"><circle cx="6" cy="10" r="2.2"/><path d="M2.5 16.5c0-2.5 1.5-3.6 3.5-3.6s3.5 1.1 3.5 3.6z"/><rect x="11" y="9" width="6" height="1.5"/><rect x="11" y="12" width="6" height="1.5"/><rect x="11" y="15" width="6" height="1.5"/></g></svg>
<div class="t" style="left:241.0px;top:444.9px;font-size:13.8px;color:#4b4431;">CRM</div>
<svg class="b" style="left:305px;top:451px" width="16" height="14" viewBox="0 0 19 17"><g fill="#4b4431"><path d="M0 6h19v2h-1l-2 9H3L1 8H0z"/><path d="M5 6l4-5 1 1-3.5 4zM14 6l-4-5-1 1 3.5 4z"/></g><g fill="#fae89e"><rect x="4.5" y="9" width="1.3" height="6"/><rect x="7.5" y="9" width="1.3" height="6"/><rect x="10.5" y="9" width="1.3" height="6"/><rect x="13.5" y="9" width="1.3" height="6"/></g></svg>
<div class="t" style="left:338.0px;top:444.9px;font-size:13.8px;color:#4b4431;">Продажи</div>
<svg class="b" style="left:428px;top:451px" width="18" height="14" viewBox="0 0 18 14"><g fill="#4b4431"><rect x="0" y="1" width="10" height="9"/><path d="M11 3.5h3.6l3 3.6v3.9h-6.6z"/><circle cx="3.2" cy="11.5" r="2.1"/><circle cx="14" cy="11.5" r="2.1"/></g><g fill="#fae89e"><path d="M12.3 4.8h1.8l1.8 2.7h-3.6z"/><circle cx="14" cy="11.5" r=".9"/></g></svg>
<div class="t" style="left:461.5px;top:444.9px;font-size:13.8px;color:#4b4431;">Закупки</div>
<svg class="b" style="left:547px;top:451px" width="15" height="15" viewBox="0 0 15 15"><rect x="0" y="0" width="15" height="15" rx="3" fill="#4b4431"/><path d="M10.5 4.2A4 4 0 1 0 10.5 10.8" stroke="#fae89e" stroke-width="1.6" fill="none"/><rect x="3" y="6.2" width="5.5" height="1.1" fill="#fae89e"/><rect x="3" y="8.1" width="5.5" height="1.1" fill="#fae89e"/></svg>
<div class="t" style="left:577.0px;top:444.9px;font-size:13.8px;color:#4b4431;">Казначейство</div>
<svg class="b" style="left:699px;top:449px" width="17" height="16" viewBox="0 0 17 16"><g fill="#4b4431"><rect x="0" y="0" width="3" height="1.8"/><rect x="1.8" y="0" width="1.5" height="12"/><rect x="4.6" y="1" width="5" height="4.6"/><rect x="10.6" y="1" width="5" height="4.6"/><rect x="4.6" y="6.6" width="5" height="4.6"/><rect x="10.6" y="6.6" width="5" height="4.6"/><rect x="1.8" y="11.6" width="15" height="1.5"/><circle cx="4.6" cy="14.5" r="1.4"/><circle cx="14" cy="14.5" r="1.4"/></g></svg>
<div class="t" style="left:731.5px;top:444.9px;font-size:13.8px;color:#4b4431;">Склад</div>
<svg class="b" style="left:805px;top:449px" width="18" height="16" viewBox="0 0 18 16"><g fill="#4b4431"><ellipse cx="12" cy="3.8" rx="3" ry="3.6"/><path d="M7.5 10.5c0-2.8 2-3.8 4.5-3.8s4.5 1 4.5 3.8v1H7.5z"/><ellipse cx="5.8" cy="6.2" rx="3.2" ry="3.8"/><path d="M0 15c0-3.8 2.4-5.2 5.8-5.2s5.8 1.4 5.8 5.2v1H0z"/><circle cx="13.8" cy="12" r="3"/></g></svg>
<div class="t" style="left:837.0px;top:442.5px;font-size:13.8px;color:#4b4431;">Управление</div>
<div class="t" style="left:837.0px;top:459.7px;font-size:13.8px;color:#4b4431;">человеческим капиталом</div>
<svg class="b" style="left:1033px;top:451px" width="15" height="15" viewBox="0 0 15 15"><circle cx="7.5" cy="7.5" r="7" fill="#4b4431"/><path d="M7.5 7.5V0.5A7 7 0 0 1 14.5 7.5z" fill="#fae89e"/><path d="M8.8 6.2V1.5A5.8 5.8 0 0 1 13.5 6.2z" fill="#4b4431"/></svg>
<div class="t" style="left:1064.0px;top:444.9px;font-size:13.8px;color:#4b4431;">Анализ</div>
<svg class="b" style="left:1145px;top:450px" width="14" height="16" viewBox="0 0 14 16"><path d="M2 0h8l4 4v12H2z" fill="#4b4431"/><g fill="#fae89e"><rect x="4" y="5" width="7" height="1.3"/><rect x="4" y="8" width="7" height="1.3"/><rect x="4" y="11" width="7" height="1.3"/></g></svg>
<div class="t" style="left:1177.0px;top:444.9px;font-size:13.8px;color:#4b4431;">Финансовый учет</div>
<div class="btn" style="left:86px;top:495.5px;width:76px;height:25px"></div>
<div class="b" style="left:124.0px;top:497.0px;width:1.0px;height:23.0px;background:#d0d0d0"></div>
<svg class="b" style="left:97px;top:502px" width="15" height="12" viewBox="0 0 15 12"><path d="M0 6L6 0.5V4.2H15V7.8H6V11.5z" fill="#5a5a5a"/></svg>
<svg class="b" style="left:135px;top:502px" width="15" height="12" viewBox="0 0 15 12"><path d="M15 6L9 0.5V4.2H0V7.8H9V11.5z" fill="#cfcfcf"/></svg>
<svg class="b" style="left:173px;top:497px" width="21" height="21" viewBox="0 0 24 24"><path d="M12 1.5l3.1 7 7.5.6-5.7 4.9 1.8 7.4L12 17.5l-6.7 3.9 1.8-7.4L1.4 9.1l7.5-.6z" fill="none" stroke="#cfcfcf" stroke-width="1.3" stroke-linejoin="round"/></svg>
<div class="t" style="left:201.5px;top:498.4px;font-size:19.35px;color:#222;">Инвойс поставщика 0000-000167 от 14.08.2025</div>
<div class="b" style="left:86.0px;top:529.0px;width:82.5px;height:29.0px;background:#ededed;border-radius:3px"></div>
<div class="t" style="left:95.0px;top:536.5px;font-size:13.8px;color:#444;">Основное</div>
<div class="t" style="left:178.5px;top:536.5px;font-size:13.8px;color:#3f6aa1;text-decoration:underline dotted #3f6aa1;text-underline-offset:3px;text-decoration-thickness:1px">Анализ заказа</div>
<div class="t" style="left:291.5px;top:536.5px;font-size:13.8px;color:#3f6aa1;text-decoration:underline dotted #3f6aa1;text-underline-offset:3px;text-decoration-thickness:1px">Взаиморасчеты (кратко)</div>
<div class="t" style="left:467.0px;top:536.5px;font-size:13.8px;color:#3f6aa1;text-decoration:underline dotted #3f6aa1;text-underline-offset:3px;text-decoration-thickness:1px">Товары к получению</div>
<div class="t" style="left:618.5px;top:536.5px;font-size:13.8px;color:#3f6aa1;text-decoration:underline dotted #3f6aa1;text-underline-offset:3px;text-decoration-thickness:1px">Задачи</div>
<div class="t" style="left:685.5px;top:536.5px;font-size:13.8px;color:#3f6aa1;text-decoration:underline dotted #3f6aa1;text-underline-offset:3px;text-decoration-thickness:1px">Присоединенные файлы</div>
<div class="b" style="left:86px;top:572px;width:164.5px;height:26.5px;border:1px solid #d7b400;border-radius:3px;background:linear-gradient(#fde635,#f3d000);box-shadow:0 1px 1px rgba(0,0,0,.15)"></div>
<div class="t" style="left:98.8px;top:579.5px;font-size:13.8px;color:#3b3420;font-weight:bold">Провести и закрыть</div>
<div class="btn" style="left:260px;top:572px;width:85.5px;height:26.5px"></div>
<div class="t" style="left:272.5px;top:579.5px;font-size:13.8px;color:#444;">Записать</div>
<div class="btn" style="left:366px;top:572px;width:87px;height:26.5px"></div>
<div class="t" style="left:378.0px;top:579.5px;font-size:13.8px;color:#444;">Провести</div>
<div class="btn" style="left:475px;top:572px;width:29px;height:26.5px"></div>
<div class="t" style="left:480.5px;top:574.4px;font-size:9px;color:#3f6f9f;">Дт</div>
<div class="t" style="left:487.0px;top:584.4px;font-size:9px;color:#cc2a2a;font-weight:bold">Кт</div>
<div class="btn" style="left:515px;top:572px;width:174.5px;height:26.5px"></div>
<div class="t" style="left:527.0px;top:579.5px;font-size:13.8px;color:#444;">Создать на основании</div>
<svg class="b" style="left:675px;top:585px" width="6" height="4" viewBox="0 0 6 4"><path d="M0 0H6L3.0 3.5z" fill="#444"/></svg>
<div class="btn" style="left:699px;top:572px;width:43px;height:26.5px"></div>
<svg class="b" style="left:706px;top:577px" width="18" height="18" viewBox="0 0 18 18"><path d="M1 1h7l4 4v11H1z" fill="#f3d27a" stroke="#d9b040" stroke-width="1"/><path d="M3 6h5M3 9h5" stroke="#fff" stroke-width="1"/><circle cx="11.5" cy="12.5" r="4.5" fill="#fff" stroke="#666" stroke-width="1.3"/><path d="M11.5 10v2.5h2" stroke="#666" stroke-width="1.1" fill="none"/></svg>
<svg class="b" style="left:729px;top:585px" width="6" height="4" viewBox="0 0 6 4"><path d="M0 0H6L3.0 3.5z" fill="#444"/></svg>
<div class="btn" style="left:751.5px;top:572px;width:30.5px;height:26.5px"></div>
<svg class="b" style="left:758px;top:578px" width="17" height="15" viewBox="0 0 17 15"><rect x="0.5" y="0.5" width="16" height="14" fill="#f4f4f4" stroke="#a8a8a8"/><rect x="0.5" y="0.5" width="16" height="3" fill="#c8c8c8"/><path d="M4.5 3.5v11M8.5 3.5v11M12.5 3.5v11M0.5 7h16M0.5 10.5h16" stroke="#c8c8c8" stroke-width=".8"/></svg>
<div class="btn" style="left:803px;top:572px;width:188px;height:26.5px"></div>
<svg class="b" style="left:812px;top:577px" width="14" height="17" viewBox="0 0 14 17"><path d="M1 1h8l4 4v11H1z" fill="#fff" stroke="#888" stroke-width="1.1"/><path d="M3.5 6h6M3.5 8.5h6M3.5 11h6M3.5 13.5h4" stroke="#aaa" stroke-width="1"/></svg>
<div class="t" style="left:832.5px;top:579.5px;font-size:13.8px;color:#444;">Связанные документы</div>
<div class="btn" style="left:1010.5px;top:572px;width:95.0px;height:26.5px"></div>
<svg class="b" style="left:1019px;top:578px" width="17" height="15" viewBox="0 0 17 15"><rect x="4" y="0.5" width="9" height="4" fill="#fff" stroke="#555"/><rect x="0.5" y="4.5" width="16" height="7" rx="1.5" fill="#4d5a6e"/><rect x="4" y="9" width="9" height="5.5" fill="#fff" stroke="#555"/></svg>
<div class="t" style="left:1041.0px;top:579.5px;font-size:13.8px;color:#444;">Печать</div>
<svg class="b" style="left:1091px;top:585px" width="6" height="4" viewBox="0 0 6 4"><path d="M0 0H6L3.0 3.5z" fill="#444"/></svg>
<div class="btn" style="left:1208.5px;top:572px;width:60.5px;height:26.5px"></div>
<div class="t" style="left:1220.0px;top:579.5px;font-size:13.8px;color:#444;">Еще</div>
<svg class="b" style="left:1255px;top:585px" width="6" height="4" viewBox="0 0 6 4"><path d="M0 0H6L3.0 3.5z" fill="#444"/></svg>
<div class="t" style="left:85.0px;top:615.3px;font-size:13.8px;color:#555;">Поставщик:</div>
<div class="fld" style="left:231.5px;top:609px;width:423.5px;height:25.5px"></div>
<div class="b" style="left:611.0px;top:610.0px;width:1.0px;height:23.5px;background:#d2d2d2"></div>
<div class="b" style="left:632.5px;top:610.0px;width:1.0px;height:23.5px;background:#d2d2d2"></div>
<svg class="b" style="left:617.5px;top:620px" width="6" height="4" viewBox="0 0 6 4"><path d="M0 0H6L3.0 3.5z" fill="#444"/></svg>
<svg class="b" style="left:639px;top:616px" width="11" height="11" viewBox="0 0 11 11"><rect x="0.5" y="3.5" width="7" height="7" fill="#fff" stroke="#666"/><rect x="3.5" y="0.5" width="7" height="7" fill="#fff" stroke="#666"/></svg>
<div class="t" style="left:235.5px;top:615.3px;font-size:13.8px;color:#444;">IMT</div>
<div class="b" style="left:258.0px;top:616.0px;width:187.0px;height:11.0px;background:linear-gradient(90deg,#b4b4b4,#d0d0d0 25%,#bcbcbc 50%,#d4d4d4 75%,#c4c4c4);filter:blur(2.2px);opacity:.85"></div>
<div class="t" style="left:666.0px;top:611.6px;font-size:13.8px;color:#c98b9b;text-decoration:underline solid #d9a8b4;text-underline-offset:2px">Не проверено</div>
<div class="t" style="left:85.0px;top:652.8px;font-size:13.8px;color:#555;">Документ-основание:</div>
<div class="fld" style="left:231.5px;top:645px;width:423.5px;height:26px"></div>
<div class="b" style="left:632.5px;top:646.0px;width:1.0px;height:24.0px;background:#d2d2d2"></div>
<div class="t" style="left:637.0px;top:653.5px;font-size:10px;color:#999;">...</div>
<div class="btn" style="left:666px;top:645px;width:31px;height:26px"></div>
<svg class="b" style="left:674px;top:651px" width="15" height="14" viewBox="0 0 15 14"><rect x="3" y="1" width="11" height="12" fill="#fff" stroke="#999" stroke-width="1"/><path d="M1 6.5L6 2.5V5h4v3H6v2.5z" fill="#2d9a45"/></svg>
<div class="t" style="left:85.0px;top:689.3px;font-size:13.8px;color:#555;">Заказ:</div>
<div class="fld" style="left:231.5px;top:682.5px;width:423.5px;height:25.5px"></div>
<div class="b" style="left:611.0px;top:683.5px;width:1.0px;height:23.5px;background:#d2d2d2"></div>
<div class="b" style="left:632.5px;top:683.5px;width:1.0px;height:23.5px;background:#d2d2d2"></div>
<svg class="b" style="left:617.5px;top:694px" width="6" height="4" viewBox="0 0 6 4"><path d="M0 0H6L3.0 3.5z" fill="#444"/></svg>
<svg class="b" style="left:639px;top:690px" width="11" height="11" viewBox="0 0 11 11"><rect x="0.5" y="3.5" width="7" height="7" fill="#fff" stroke="#666"/><rect x="3.5" y="0.5" width="7" height="7" fill="#fff" stroke="#666"/></svg>
<div class="btn" style="left:666px;top:682px;width:31px;height:26px"></div>
<svg class="b" style="left:674px;top:688px" width="15" height="14" viewBox="0 0 15 14"><rect x="3" y="1" width="11" height="12" fill="#fff" stroke="#999" stroke-width="1"/><path d="M1 6.5L6 2.5V5h4v3H6v2.5z" fill="#2d9a45"/></svg>
<div class="t" style="left:771.0px;top:615.3px;font-size:13.8px;color:#555;">Номер:</div>
<div class="fld" style="left:868.5px;top:609px;width:217.5px;height:25px"></div>
<div class="t" style="left:871.5px;top:615.3px;font-size:13.8px;color:#444;">0000-000167</div>
<div class="t" style="left:1095.5px;top:615.3px;font-size:13.8px;color:#555;">Дата:</div>
<div class="fld" style="left:1140px;top:609px;width:127.5px;height:25px"></div>
<div class="b" style="left:1245.0px;top:610.0px;width:1.0px;height:23.0px;background:#d2d2d2"></div>
<div class="t" style="left:1143.5px;top:615.3px;font-size:13.8px;color:#444;width:94px;overflow:hidden">14.08.2025 12:00</div>
<div class="b" style="left:1237.0px;top:614.0px;width:1.0px;height:16.0px;background:#555"></div>
<svg class="b" style="left:1250px;top:615px" width="12" height="12" viewBox="0 0 12 12"><rect x="0.5" y="1.5" width="11" height="10" fill="#fff" stroke="#444"/><rect x="0.5" y="1.5" width="11" height="3" fill="#444"/><path d="M3 7h1.5M5.5 7H7M8 7h1.5M3 9h1.5M5.5 9H7M8 9h1.5" stroke="#777"/></svg>
<div class="t" style="left:771.0px;top:650.6px;font-size:13.8px;color:#555;">Организация:</div>
<div class="fld" style="left:868.5px;top:644px;width:363.0px;height:25.5px"></div>
<div class="b" style="left:1187.0px;top:645.0px;width:1.0px;height:23.5px;background:#d2d2d2"></div>
<div class="b" style="left:1209.0px;top:645.0px;width:1.0px;height:23.5px;background:#d2d2d2"></div>
<svg class="b" style="left:1193.5px;top:655px" width="6" height="4" viewBox="0 0 6 4"><path d="M0 0H6L3.0 3.5z" fill="#444"/></svg>
<svg class="b" style="left:1215px;top:651px" width="11" height="11" viewBox="0 0 11 11"><rect x="0.5" y="3.5" width="7" height="7" fill="#fff" stroke="#666"/><rect x="3.5" y="0.5" width="7" height="7" fill="#fff" stroke="#666"/></svg>
<div class="t" style="left:871.5px;top:650.6px;font-size:13.8px;color:#444;">Centr</div>
<div class="b" style="left:905.0px;top:652.0px;width:160.0px;height:10.0px;background:linear-gradient(90deg,#b8b8b8,#d4d4d4 30%,#b4b4b4 60%,#d0d0d0);filter:blur(2.2px);opacity:.85"></div>
<div class="t" style="left:771.0px;top:685.7px;font-size:13.8px;color:#555;">Тип инвойса:</div>
<div class="fld" style="left:868.5px;top:679px;width:363.0px;height:25.5px"></div>
<div class="b" style="left:1209.0px;top:680.0px;width:1.0px;height:23.5px;background:#d2d2d2"></div>
<svg class="b" style="left:1216px;top:690px" width="6" height="4" viewBox="0 0 6 4"><path d="M0 0H6L3.0 3.5z" fill="#444"/></svg>
<div class="t" style="left:871.5px;top:685.7px;font-size:13.8px;color:#444;">Инвойс</div>
<div class="t" style="left:771.0px;top:720.8px;font-size:13.8px;color:#555;">Склад:</div>
<div class="fld" style="left:868.5px;top:714px;width:363.0px;height:25.5px"></div>
<div class="b" style="left:1187.0px;top:715.0px;width:1.0px;height:23.5px;background:#d2d2d2"></div>
<div class="b" style="left:1209.0px;top:715.0px;width:1.0px;height:23.5px;background:#d2d2d2"></div>
<svg class="b" style="left:1193.5px;top:725px" width="6" height="4" viewBox="0 0 6 4"><path d="M0 0H6L3.0 3.5z" fill="#444"/></svg>
<svg class="b" style="left:1215px;top:721px" width="11" height="11" viewBox="0 0 11 11"><rect x="0.5" y="3.5" width="7" height="7" fill="#fff" stroke="#666"/><rect x="3.5" y="0.5" width="7" height="7" fill="#fff" stroke="#666"/></svg>
<div class="t" style="left:871.5px;top:720.8px;font-size:13.8px;color:#444;">Goods in transit</div>
<div class="t" style="left:771.0px;top:754.1px;font-size:13.8px;color:#555;">Счета учета:</div>
<div class="t" style="left:868.5px;top:754.1px;font-size:13.8px;color:#3f6aa1;text-decoration:underline solid #3f6aa1;text-underline-offset:3px;text-decoration-thickness:1px">2010100, 1050100</div>
<div class="b" style="left:772.0px;top:779.5px;width:439.5px;height:22.0px;border:1px solid #dadada;background:#fff"></div>
<div class="t" style="left:1006.5px;top:785.1px;font-size:13.8px;color:#3f6aa1;text-decoration:underline solid #3f6aa1;text-underline-offset:3px;text-decoration-thickness:1px">EUR</div>
<svg class="b" style="left:1280px;top:617px" width="9" height="6" viewBox="0 0 9 6"><path d="M0.5 5.5L4.5 1l4 4.5z" fill="#c8c8c8"/></svg>
<div class="b" style="left:1280.0px;top:797.0px;width:8.0px;height:160.0px;background:#dcdcdc;border-radius:0 0 4px 4px"></div>
<div class="b" style="left:1280.0px;top:632.0px;width:8.0px;height:167.0px;background:#9f9f9f;border-radius:4px"></div>
<svg class="b" style="left:1280px;top:966px" width="9" height="7" viewBox="0 0 9 7"><path d="M0.5 0.5h8l-4 5.5z" fill="#c0c0c0"/></svg>
<div class="b" style="left:85.5px;top:838.5px;width:1184.0px;height:141.5px;border:1px solid #cfcfcf;border-bottom:none;background:#fff"></div>
<div class="b" style="left:86.0px;top:812.0px;width:71.0px;height:27.0px;background:#ececec;border:1px solid #cfcfcf;border-radius:2px 2px 0 0"></div>
<div class="t" style="left:86px;width:71px;top:818.8px;font-size:13.8px;color:#444;text-align:center">Товары</div>
<div class="b" style="left:157.0px;top:811.0px;width:85.0px;height:29.0px;background:#fff;border:1px solid #cfcfcf;border-bottom:none"></div>
<div class="t" style="left:157px;width:85px;top:818.8px;font-size:13.8px;color:#444;text-align:center">Услуги (1)</div>
<div class="b" style="left:242.0px;top:812.0px;width:106.5px;height:27.0px;background:#ececec;border:1px solid #cfcfcf;border-radius:2px 2px 0 0"></div>
<div class="t" style="left:242px;width:106.5px;top:818.8px;font-size:13.8px;color:#444;text-align:center">Зачет аванса</div>
<div class="b" style="left:348.5px;top:812.0px;width:126.0px;height:27.0px;background:#ececec;border:1px solid #cfcfcf;border-radius:2px 2px 0 0"></div>
<div class="t" style="left:348.5px;width:126.0px;top:818.8px;font-size:13.8px;color:#444;text-align:center">Условия оплаты</div>
<div class="b" style="left:474.5px;top:812.0px;width:206.5px;height:27.0px;background:#ececec;border:1px solid #cfcfcf;border-radius:2px 2px 0 0"></div>
<div class="t" style="left:474.5px;width:206.5px;top:818.8px;font-size:13.8px;color:#444;text-align:center">Скидки за досрочную оплату</div>
<div class="b" style="left:681.0px;top:812.0px;width:217.0px;height:27.0px;background:#ececec;border:1px solid #cfcfcf;border-radius:2px 2px 0 0"></div>
<div class="t" style="left:681px;width:217px;top:818.8px;font-size:13.8px;color:#444;text-align:center">Дополнительная информация</div>
<div class="b" style="left:898.0px;top:812.0px;width:53.5px;height:27.0px;background:#ececec;border:1px solid #cfcfcf;border-radius:2px 2px 0 0"></div>
<div class="t" style="left:898px;width:53.5px;top:818.8px;font-size:13.8px;color:#444;text-align:center">CFM</div>
<div class="b" style="left:97.5px;top:850.5px;width:15.0px;height:15.0px;border:1px solid #a8a8a8;background:#fff;border-radius:2px"></div>
<div class="t" style="left:119.0px;top:851.3px;font-size:13.8px;color:#444;">Распределить на товары</div>
<div class="btn" style="left:96.5px;top:876.5px;width:88.0px;height:26.0px"></div>
<div class="t" style="left:109.0px;top:882.8px;font-size:13.8px;color:#444;">Добавить</div>
<div class="btn" style="left:205.5px;top:876.5px;width:60.0px;height:26.0px"></div>
<div class="b" style="left:235.5px;top:877.5px;width:1.0px;height:24.0px;background:#d0d0d0"></div>
<svg class="b" style="left:213px;top:882px" width="13" height="14" viewBox="0 0 13 14"><path d="M6.5 0.5L12.5 7H9v6.5H4V7H0.5z" fill="#3d8fd8"/></svg>
<svg class="b" style="left:244px;top:882px" width="13" height="14" viewBox="0 0 13 14"><path d="M6.5 13.5L12.5 7H9V0.5H4V7H0.5z" fill="#3d8fd8"/></svg>
<div class="btn" style="left:286px;top:876.5px;width:88.5px;height:26.0px"></div>
<div class="t" style="left:298.5px;top:882.8px;font-size:13.8px;color:#444;">Выбрать</div>
<svg class="b" style="left:361px;top:889px" width="6" height="4" viewBox="0 0 6 4"><path d="M0 0H6L3.0 3.5z" fill="#444"/></svg>
<div class="btn" style="left:384px;top:876.5px;width:28px;height:26.0px"></div>
<svg class="b" style="left:390px;top:882px" width="16" height="14" viewBox="0 0 16 14"><rect x="0.5" y="0.5" width="15" height="13" fill="#e8f4e8" stroke="#4a9a4a"/><path d="M0.5 4.5h15M0.5 8.5h15M5 0.5v13" stroke="#4a9a4a" stroke-width=".9"/><path d="M7 6.5h6l-3 3z" fill="#2d8a3e"/></svg>
<div class="btn" style="left:436px;top:876.5px;width:30.5px;height:26.0px"></div>
<svg class="b" style="left:443px;top:881px" width="16" height="16" viewBox="0 0 16 16"><rect x="1" y="1" width="9" height="11" fill="#fff" stroke="#c0c0c0"/><rect x="5" y="4" width="9" height="11" fill="#fff" stroke="#c0c0c0"/></svg>
<div class="btn" style="left:476px;top:876.5px;width:30px;height:26.0px"></div>
<svg class="b" style="left:483px;top:880px" width="16" height="17" viewBox="0 0 16 17"><rect x="1" y="2" width="10" height="12" rx="1" fill="#a08a70" stroke="#806a50"/><rect x="3.5" y="0.5" width="5" height="3" fill="#ccc" stroke="#888"/><rect x="6" y="6" width="9" height="10" fill="#fff" stroke="#aaa"/></svg>
<div class="btn" style="left:1197px;top:876.5px;width:60.5px;height:26.0px"></div>
<div class="t" style="left:1210.0px;top:882.8px;font-size:13.8px;color:#444;">Еще</div>
<svg class="b" style="left:1245px;top:889px" width="6" height="4" viewBox="0 0 6 4"><path d="M0 0H6L3.0 3.5z" fill="#444"/></svg>
<div class="b" style="left:97.0px;top:912.0px;width:1160.5px;height:68.0px;border:1px solid #cfcfcf;border-bottom:none;background:#fff"></div>
<div class="b" style="left:98.0px;top:913.0px;width:1158.5px;height:31.0px;background:#efeef1;border-bottom:1px solid #d8d8d8"></div>
<div class="b" style="left:156.0px;top:913.0px;width:1.0px;height:31.0px;background:#d9d9dc"></div>
<div class="b" style="left:380.0px;top:913.0px;width:1.0px;height:31.0px;background:#d9d9dc"></div>
<div class="b" style="left:549.0px;top:913.0px;width:1.0px;height:31.0px;background:#d9d9dc"></div>
<div class="b" style="left:670.0px;top:913.0px;width:1.0px;height:31.0px;background:#d9d9dc"></div>
<div class="b" style="left:748.5px;top:913.0px;width:1.0px;height:31.0px;background:#d9d9dc"></div>
<div class="b" style="left:870.0px;top:913.0px;width:1.0px;height:31.0px;background:#d9d9dc"></div>
<div class="b" style="left:963.0px;top:913.0px;width:1.0px;height:31.0px;background:#d9d9dc"></div>
<div class="b" style="left:1084.5px;top:913.0px;width:1.0px;height:31.0px;background:#d9d9dc"></div>
<div class="b" style="left:1231.0px;top:913.0px;width:1.0px;height:31.0px;background:#d9d9dc"></div>
<div class="t" style="left:105.5px;top:922.3px;font-size:13.8px;color:#555;">#</div>
<div class="t" style="left:164.0px;top:922.3px;font-size:13.8px;color:#555;">Услуга</div>
<div class="t" style="left:388.0px;top:922.3px;font-size:13.8px;color:#555;">Содержание</div>
<div class="t" style="left:556.5px;top:922.3px;font-size:13.8px;color:#555;">Количество</div>
<div class="t" style="left:677.5px;top:922.3px;font-size:13.8px;color:#555;">Ед. изм.</div>
<div class="t" style="left:756.5px;top:922.3px;font-size:13.8px;color:#555;">Цена</div>
<div class="t" style="left:878.5px;top:922.3px;font-size:13.8px;color:#555;">Скидки</div>
<div class="t" style="left:971.0px;top:922.3px;font-size:13.8px;color:#555;">Сумма</div>
<div class="t" style="left:1093.0px;top:922.3px;font-size:13.8px;color:#555;">Счета учета</div>
<div class="t" style="left:1233.5px;top:922.3px;font-size:13.8px;color:#555;">Ст</div>
<div class="b" style="left:98.0px;top:944.0px;width:1158.5px;height:31.0px;background:#fdecc0;border-bottom:1px solid #eee"></div>
<div class="b" style="left:98.0px;top:944.0px;width:58.0px;height:30.0px;background:#fbe08c"></div>
<div class="b" style="left:380.0px;top:944.0px;width:1.0px;height:30.0px;background:#fff5dc"></div>
<div class="b" style="left:549.0px;top:944.0px;width:1.0px;height:30.0px;background:#fff5dc"></div>
<div class="b" style="left:670.0px;top:944.0px;width:1.0px;height:30.0px;background:#fff5dc"></div>
<div class="b" style="left:748.5px;top:944.0px;width:1.0px;height:30.0px;background:#fff5dc"></div>
<div class="b" style="left:870.0px;top:944.0px;width:1.0px;height:30.0px;background:#fff5dc"></div>
<div class="b" style="left:963.0px;top:944.0px;width:1.0px;height:30.0px;background:#fff5dc"></div>
<div class="b" style="left:1084.5px;top:944.0px;width:1.0px;height:30.0px;background:#fff5dc"></div>
<div class="b" style="left:1231.0px;top:944.0px;width:1.0px;height:30.0px;background:#fff5dc"></div>
<div class="t" style="right:1151.5px;top:953.8px;font-size:13.8px;color:#3b3420;">1</div>
<div class="t" style="left:164.0px;top:953.8px;font-size:13.8px;color:#3b3420;">Air tickets</div>
<div class="t" style="right:637.5px;top:953.8px;font-size:13.8px;color:#3b3420;">1,000</div>
<div class="t" style="left:677.5px;top:953.8px;font-size:13.8px;color:#3b3420;">n</div>
<div class="t" style="right:437.0px;top:953.8px;font-size:13.8px;color:#3b3420;">2 356,00</div>
<div class="t" style="right:223.0px;top:953.8px;font-size:13.8px;color:#3b3420;">2 356,00</div>
<div class="t" style="left:1093.0px;top:953.8px;font-size:13.8px;color:#3f6aa1;text-decoration:underline solid #3f6aa1;text-underline-offset:3px;text-decoration-thickness:1px">1020100</div>
<div class="t" style="left:1237.0px;top:953.8px;font-size:13.8px;color:#a89870;width:19px;overflow:hidden">&lt;Н</div>
<div class="b" style="left:97.0px;top:975.0px;width:1.0px;height:5.0px;background:#cfcfcf"></div>
<div class="b" style="left:1257.0px;top:975.0px;width:1.0px;height:5.0px;background:#cfcfcf"></div>
<svg class="b" style="left:1008px;top:829px" width="15" height="20" viewBox="0 0 15 20"><path d="M1 1v15l4-3.5 2.8 6 2.2-1-2.8-6H13z" fill="#fff" stroke="#222" stroke-width="1"/></svg>
<svg class="b" style="left:1067px;top:825px" width="10" height="12" viewBox="0 0 10 12"><path d="M1 1h6M1 1v6M1 1l7 7" stroke="#333" stroke-width="1.2" fill="none"/></svg>
</div></div>
</body></html>
